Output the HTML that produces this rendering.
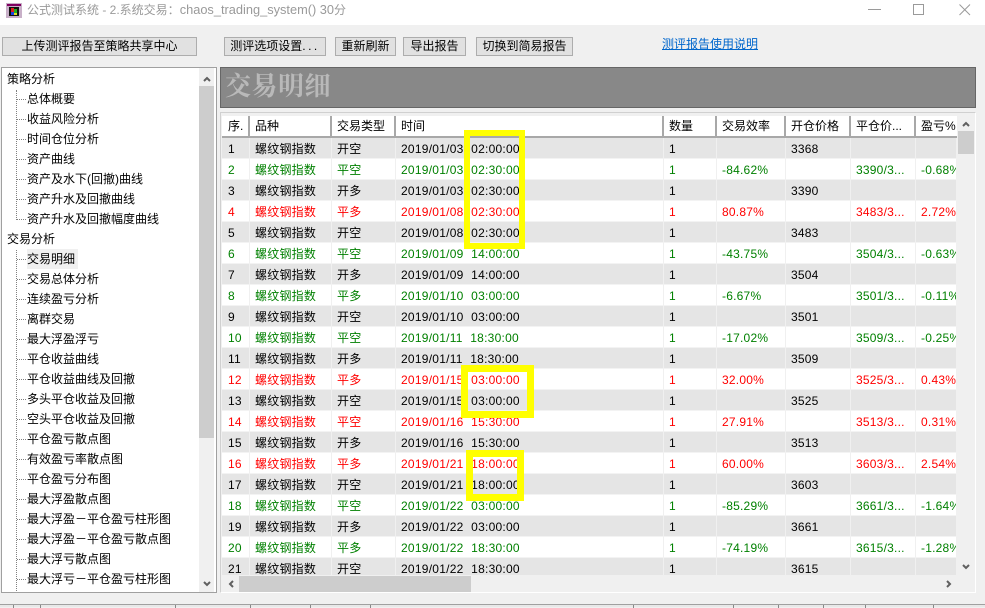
<!DOCTYPE html>
<html lang="zh"><head><meta charset="utf-8"><style>
html,body{margin:0;padding:0}
body{width:985px;height:607px;overflow:hidden;position:relative;background:#f0f0f0;font:12px/20px "Liberation Sans","WenQuanYi Zen Hei","Noto Sans CJK SC",sans-serif;color:#000}
div,span,a{position:absolute;box-sizing:border-box}
#title{left:0;top:0;width:985px;height:25px;background:#fff}
#title .t{left:27px;top:0;white-space:nowrap;color:#9a9a9a;line-height:20px;font-size:12px}
#title .t b{font-weight:normal;font-size:12.8px;position:static}
.btn{top:37px;height:19px;background:#e1e1e1;border:1px solid #adadad;text-align:center;line-height:17px;white-space:nowrap}
.btn u{text-decoration:none;letter-spacing:2.5px}
#link{left:662px;top:34px;color:#0066cc;text-decoration:underline;white-space:nowrap}
#tree{left:1px;top:67px;width:216px;height:526px;background:#fff;border:1px solid #a0a0a0;overflow:hidden}
.it{white-space:nowrap;height:20px;line-height:20px}
.l0{left:5px}.l1{left:25px;padding-left:0}
.sel{background:#f0f0f0;width:51px}
.vd{left:14px;width:1px;border-left:1px dotted #808080}
.hd{left:15px;width:9px;height:1px;border-top:1px dotted #808080}
#banner{left:220px;top:67px;width:756px;height:41px;background:#888;border:1px solid #666;font:bold 26px/37px "Liberation Serif","Noto Serif CJK SC",serif;color:#b9b9b9;padding-left:4px;letter-spacing:.5px}
#frame{left:220px;top:112px;width:756px;height:481px;background:#f0f0f0;border:1px solid #fff;border-top:1px solid #d0d0d0;border-left:1px solid #d0d0d0}
#tw{left:222px;top:116px;width:735px;height:459px;overflow:hidden;background:#fff}
table{position:absolute;left:0;top:0;border-collapse:separate;border-spacing:0;table-layout:fixed;width:735px}
td,th{box-sizing:border-box;padding:2px 0 0 5px;height:21px;font-weight:normal;text-align:left;white-space:nowrap;overflow:hidden;border-right:1px solid #f0f0f0;border-bottom:1px solid #f3f3f3;line-height:18px;letter-spacing:.22px;vertical-align:top}
td:nth-child(4){letter-spacing:.25px;word-spacing:4px}
th{height:22px;padding-top:0;line-height:20px;border-right:2px solid #a8a8a8;border-bottom:2px solid #a8a8a8;background:#fff;letter-spacing:0}
td:first-child{padding-left:6px}
th:first-child{padding-left:6px}
tr.o td{background:#e5e5e5}
tr.g td{color:#008000}
tr.r td{color:#ff0000}
.sb{background:#f0f0f0}
.th{background:#cdcdcd}
.yb{border:6px solid #ffff00;background:transparent}
svg{position:absolute;overflow:visible}
#bot{left:0;top:604px;width:985px;height:3px;background:#e8e8e8;border-top:1px solid #a0a0a0}
#bot i{position:absolute;top:0;width:1px;height:3px;background:#888}
</style></head><body>
<div id="title">
<svg style="left:6px;top:3px" width="16" height="15"><rect x="0" y="0" width="16" height="15" fill="#c8b0c8"/><rect x="1" y="1" width="14" height="2" fill="#800060"/><rect x="3" y="4" width="10" height="9" fill="#111"/><rect x="5" y="5" width="3" height="4" fill="#e02020"/><rect x="8" y="6" width="3" height="4" fill="#20b020"/><rect x="5" y="9" width="3" height="3" fill="#2040e0"/><rect x="8" y="10" width="3" height="2" fill="#e0e020"/></svg>
<div class="t">公式测试系统 - 2.系统交易：<b>chaos_trading_system() 30</b>分</div>
<svg style="left:868px;top:4px" width="104" height="12" fill="none" stroke="#9a9a9a" stroke-width="1"><path d="M0 5.5H13M45.5 .5H55.5V10.5H45.5ZM91.5 .5L102 11M102 .5L91.5 11"/></svg>
</div>
<div class="btn" style="left:2px;width:195px">上传测评报告至策略共享中心</div>
<div class="btn" style="left:224px;width:102px">测评选项设置<u>...</u></div>
<div class="btn" style="left:335px;width:61px">重新刷新</div>
<div class="btn" style="left:403px;width:63px">导出报告</div>
<div class="btn" style="left:476px;width:97px">切换到简易报告</div>
<a id="link">测评报告使用说明</a>
<div id="tree">
<div class="vd" style="top:22px;height:130px"></div><div class="vd" style="top:182px;height:345px"></div>
<div class="hd" style="top:31px"></div><div class="hd" style="top:51px"></div><div class="hd" style="top:71px"></div><div class="hd" style="top:91px"></div><div class="hd" style="top:111px"></div><div class="hd" style="top:131px"></div><div class="hd" style="top:151px"></div>
<div class="hd" style="top:191px"></div><div class="hd" style="top:211px"></div><div class="hd" style="top:231px"></div><div class="hd" style="top:251px"></div><div class="hd" style="top:271px"></div><div class="hd" style="top:291px"></div><div class="hd" style="top:311px"></div><div class="hd" style="top:331px"></div><div class="hd" style="top:351px"></div><div class="hd" style="top:371px"></div><div class="hd" style="top:391px"></div><div class="hd" style="top:411px"></div><div class="hd" style="top:431px"></div><div class="hd" style="top:451px"></div><div class="hd" style="top:471px"></div><div class="hd" style="top:491px"></div><div class="hd" style="top:511px"></div>
<div class="it l0" style="top:1px">策略分析</div>
<div class="it l1" style="top:21px">总体概要</div>
<div class="it l1" style="top:41px">收益风险分析</div>
<div class="it l1" style="top:61px">时间仓位分析</div>
<div class="it l1" style="top:81px">资产曲线</div>
<div class="it l1" style="top:101px">资产及水下(回撤)曲线</div>
<div class="it l1" style="top:121px">资产升水及回撤曲线</div>
<div class="it l1" style="top:141px">资产升水及回撤幅度曲线</div>
<div class="it l0" style="top:161px">交易分析</div>
<div class="it l1 sel" style="top:181px">交易明细</div>
<div class="it l1" style="top:201px">交易总体分析</div>
<div class="it l1" style="top:221px">连续盈亏分析</div>
<div class="it l1" style="top:241px">离群交易</div>
<div class="it l1" style="top:261px">最大浮盈浮亏</div>
<div class="it l1" style="top:281px">平仓收益曲线</div>
<div class="it l1" style="top:301px">平仓收益曲线及回撤</div>
<div class="it l1" style="top:321px">多头平仓收益及回撤</div>
<div class="it l1" style="top:341px">空头平仓收益及回撤</div>
<div class="it l1" style="top:361px">平仓盈亏散点图</div>
<div class="it l1" style="top:381px">有效盈亏率散点图</div>
<div class="it l1" style="top:401px">平仓盈亏分布图</div>
<div class="it l1" style="top:421px">最大浮盈散点图</div>
<div class="it l1" style="top:441px">最大浮盈－平仓盈亏柱形图</div>
<div class="it l1" style="top:461px">最大浮盈－平仓盈亏散点图</div>
<div class="it l1" style="top:481px">最大浮亏散点图</div>
<div class="it l1" style="top:501px">最大浮亏－平仓盈亏柱形图</div>
<div class="sb" style="left:197px;top:0;width:15px;height:524px"></div>
<div class="th" style="left:197px;top:18px;width:15px;height:352px"></div>
<svg style="left:201px;top:8px" width="8" height="6" fill="none" stroke="#606060" stroke-width="2"><path d="M1 5L4 2L7 5"/></svg>
<svg style="left:201px;top:513px" width="8" height="6" fill="none" stroke="#606060" stroke-width="2"><path d="M1 1L4 4L7 1"/></svg>
</div>
<div id="banner">交易明细</div>
<div id="frame"></div>
<div id="tw"><table>
<colgroup><col style="width:28px"><col style="width:82px"><col style="width:64px"><col style="width:268px"><col style="width:53px"><col style="width:69px"><col style="width:65px"><col style="width:65px"><col style="width:41px"></colgroup>
<tr><th>序.</th><th>品种</th><th>交易类型</th><th>时间</th><th>数量</th><th>交易效率</th><th>开仓价格</th><th>平仓价...</th><th style="border-right:0">盈亏%</th></tr>
<tr class="o"><td>1</td><td>螺纹钢指数</td><td>开空</td><td>2019/01/03 02:00:00</td><td>1</td><td></td><td>3368</td><td></td><td></td></tr>
<tr class="g"><td>2</td><td>螺纹钢指数</td><td>平空</td><td>2019/01/03 02:30:00</td><td>1</td><td>-84.62%</td><td></td><td>3390/3...</td><td>-0.68%</td></tr>
<tr class="o"><td>3</td><td>螺纹钢指数</td><td>开多</td><td>2019/01/03 02:30:00</td><td>1</td><td></td><td>3390</td><td></td><td></td></tr>
<tr class="r"><td>4</td><td>螺纹钢指数</td><td>平多</td><td>2019/01/08 02:30:00</td><td>1</td><td>80.87%</td><td></td><td>3483/3...</td><td>2.72%</td></tr>
<tr class="o"><td>5</td><td>螺纹钢指数</td><td>开空</td><td>2019/01/08 02:30:00</td><td>1</td><td></td><td>3483</td><td></td><td></td></tr>
<tr class="g"><td>6</td><td>螺纹钢指数</td><td>平空</td><td>2019/01/09 14:00:00</td><td>1</td><td>-43.75%</td><td></td><td>3504/3...</td><td>-0.63%</td></tr>
<tr class="o"><td>7</td><td>螺纹钢指数</td><td>开多</td><td>2019/01/09 14:00:00</td><td>1</td><td></td><td>3504</td><td></td><td></td></tr>
<tr class="g"><td>8</td><td>螺纹钢指数</td><td>平多</td><td>2019/01/10 03:00:00</td><td>1</td><td>-6.67%</td><td></td><td>3501/3...</td><td>-0.11%</td></tr>
<tr class="o"><td>9</td><td>螺纹钢指数</td><td>开空</td><td>2019/01/10 03:00:00</td><td>1</td><td></td><td>3501</td><td></td><td></td></tr>
<tr class="g"><td>10</td><td>螺纹钢指数</td><td>平空</td><td>2019/01/11 18:30:00</td><td>1</td><td>-17.02%</td><td></td><td>3509/3...</td><td>-0.25%</td></tr>
<tr class="o"><td>11</td><td>螺纹钢指数</td><td>开多</td><td>2019/01/11 18:30:00</td><td>1</td><td></td><td>3509</td><td></td><td></td></tr>
<tr class="r"><td>12</td><td>螺纹钢指数</td><td>平多</td><td>2019/01/15 03:00:00</td><td>1</td><td>32.00%</td><td></td><td>3525/3...</td><td>0.43%</td></tr>
<tr class="o"><td>13</td><td>螺纹钢指数</td><td>开空</td><td>2019/01/15 03:00:00</td><td>1</td><td></td><td>3525</td><td></td><td></td></tr>
<tr class="r"><td>14</td><td>螺纹钢指数</td><td>平空</td><td>2019/01/16 15:30:00</td><td>1</td><td>27.91%</td><td></td><td>3513/3...</td><td>0.31%</td></tr>
<tr class="o"><td>15</td><td>螺纹钢指数</td><td>开多</td><td>2019/01/16 15:30:00</td><td>1</td><td></td><td>3513</td><td></td><td></td></tr>
<tr class="r"><td>16</td><td>螺纹钢指数</td><td>平多</td><td>2019/01/21 18:00:00</td><td>1</td><td>60.00%</td><td></td><td>3603/3...</td><td>2.54%</td></tr>
<tr class="o"><td>17</td><td>螺纹钢指数</td><td>开空</td><td>2019/01/21 18:00:00</td><td>1</td><td></td><td>3603</td><td></td><td></td></tr>
<tr class="g"><td>18</td><td>螺纹钢指数</td><td>平空</td><td>2019/01/22 03:00:00</td><td>1</td><td>-85.29%</td><td></td><td>3661/3...</td><td>-1.64%</td></tr>
<tr class="o"><td>19</td><td>螺纹钢指数</td><td>开多</td><td>2019/01/22 03:00:00</td><td>1</td><td></td><td>3661</td><td></td><td></td></tr>
<tr class="g"><td>20</td><td>螺纹钢指数</td><td>平多</td><td>2019/01/22 18:30:00</td><td>1</td><td>-74.19%</td><td></td><td>3615/3...</td><td>-1.28%</td></tr>
<tr class="o"><td>21</td><td>螺纹钢指数</td><td>开空</td><td>2019/01/22 18:30:00</td><td>1</td><td></td><td>3615</td><td></td><td></td></tr>
</table></div>
<div class="sb" style="left:957px;top:113px;width:18px;height:479px"></div>
<div class="th" style="left:958px;top:131px;width:16px;height:23px"></div>
<svg style="left:962px;top:121px" width="8" height="6" fill="none" stroke="#606060" stroke-width="2"><path d="M1 5L4 2L7 5"/></svg>
<svg style="left:962px;top:564px" width="8" height="6" fill="none" stroke="#606060" stroke-width="2"><path d="M1 1L4 4L7 1"/></svg>
<div class="sb" style="left:222px;top:575px;width:735px;height:17px"></div>
<div class="th" style="left:239px;top:576px;width:232px;height:16px"></div>
<svg style="left:228px;top:580px" width="6" height="8" fill="none" stroke="#606060" stroke-width="2"><path d="M5 1L2 4L5 7"/></svg>
<svg style="left:946px;top:580px" width="6" height="8" fill="none" stroke="#606060" stroke-width="2"><path d="M1 1L4 4L1 7"/></svg>
<div class="yb" style="left:464px;top:130px;width:61px;height:119px"></div>
<div class="yb" style="left:461px;top:365px;width:73px;height:53px;border-width:7px"></div>
<div class="yb" style="left:466px;top:450px;width:58px;height:51px;border-width:7px"></div>
<div id="bot"><i style="left:13px"></i><i style="left:40px"></i><i style="left:175px"></i><i style="left:250px"></i><i style="left:310px"></i><i style="left:370px"></i><i style="left:633px"></i><i style="left:733px"></i><i style="left:778px"></i><i style="left:823px"></i><i style="left:865px"></i><i style="left:933px"></i></div>
</body></html>
